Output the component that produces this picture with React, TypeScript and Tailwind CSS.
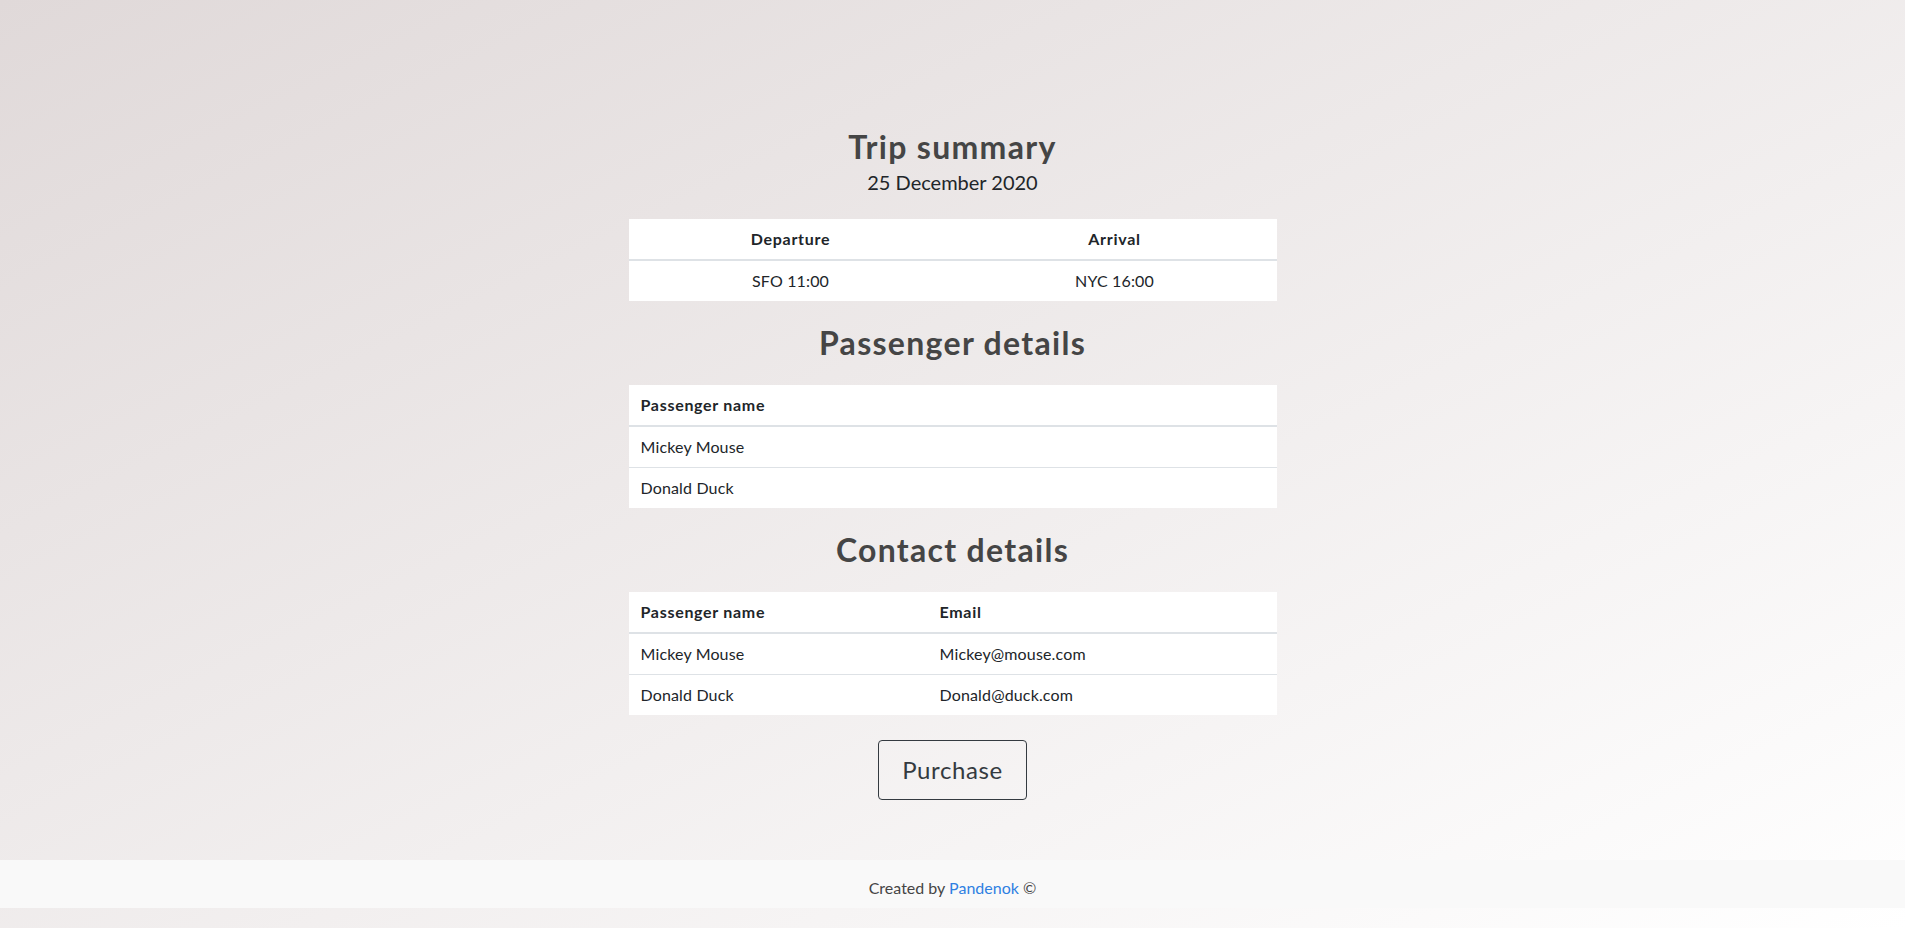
import React from "react";

const font = { fontFamily: "Lato, 'Noto Sans', 'Liberation Sans', sans-serif" };

function Th({ children, className = "" }: { children: React.ReactNode; className?: string }) {
  return (
    <th className={`px-3 py-2 text-[16px] leading-6 font-bold tracking-[0.7px] text-[#212529] border-b-2 border-[#dee2e6] ${className}`}>
      {children}
    </th>
  );
}

function Td({ children, className = "" }: { children: React.ReactNode; className?: string }) {
  return <td className={`px-3 py-2 text-[16px] leading-6 tracking-[0.15px] text-[#212529] ${className}`}>{children}</td>;
}

export default function App() {
  return (
    <div
      className="min-h-screen flex flex-col bg-[linear-gradient(to_bottom_right,#e0d9d9,#ffffff)]"
      style={font}
    >
      <main className="flex-1 flex flex-col items-center pt-[128px]">
        <h2 className="text-[32px] leading-[38px] font-bold tracking-[1.3px] text-[#454545]">Trip summary</h2>
        <p className="mt-[1px] text-[20px] leading-[30px] text-[#212529]">25 December 2020</p>

        <table className="mt-[22px] w-[648px] bg-white border-collapse">
          <thead>
            <tr>
              <Th className="text-center w-1/2">Departure</Th>
              <Th className="text-center w-1/2">Arrival</Th>
            </tr>
          </thead>
          <tbody>
            <tr>
              <Td className="text-center">SFO 11:00</Td>
              <Td className="text-center">NYC 16:00</Td>
            </tr>
          </tbody>
        </table>

        <h2 className="mt-[23px] text-[32px] leading-[38px] font-bold tracking-[1.3px] text-[#454545]">Passenger details</h2>

        <table className="mt-[23px] w-[648px] bg-white border-collapse">
          <thead>
            <tr>
              <Th className="text-left">Passenger name</Th>
            </tr>
          </thead>
          <tbody>
            <tr>
              <Td>Mickey Mouse</Td>
            </tr>
            <tr className="border-t border-[#dee2e6]">
              <Td>Donald Duck</Td>
            </tr>
          </tbody>
        </table>

        <h2 className="mt-[23px] text-[32px] leading-[38px] font-bold tracking-[1.3px] text-[#454545]">Contact details</h2>

        <table className="mt-[23px] w-[648px] bg-white border-collapse">
          <thead>
            <tr>
              <Th className="text-left w-[299px]">Passenger name</Th>
              <Th className="text-left">Email</Th>
            </tr>
          </thead>
          <tbody>
            <tr>
              <Td>Mickey Mouse</Td>
              <Td>Mickey@mouse.com</Td>
            </tr>
            <tr className="border-t border-[#dee2e6]">
              <Td>Donald Duck</Td>
              <Td>Donald@duck.com</Td>
            </tr>
          </tbody>
        </table>

        <button
          type="button"
          className="mt-[25px] w-[149px] h-[60px] border border-[#343a40] rounded-[4px] text-[24px] leading-[36px] tracking-[0.6px] text-[#343a40] bg-transparent"
        >
          Purchase
        </button>
      </main>

      <footer className="h-[48px] bg-[#f9f9f9] flex justify-center pt-[16px] text-[16px] leading-6 text-[#454545]">
        <span>
          Created by <a className="text-[#2f80e2]">Pandenok</a> ©
        </span>
      </footer>
      <div className="h-[20px]" />
    </div>
  );
}
